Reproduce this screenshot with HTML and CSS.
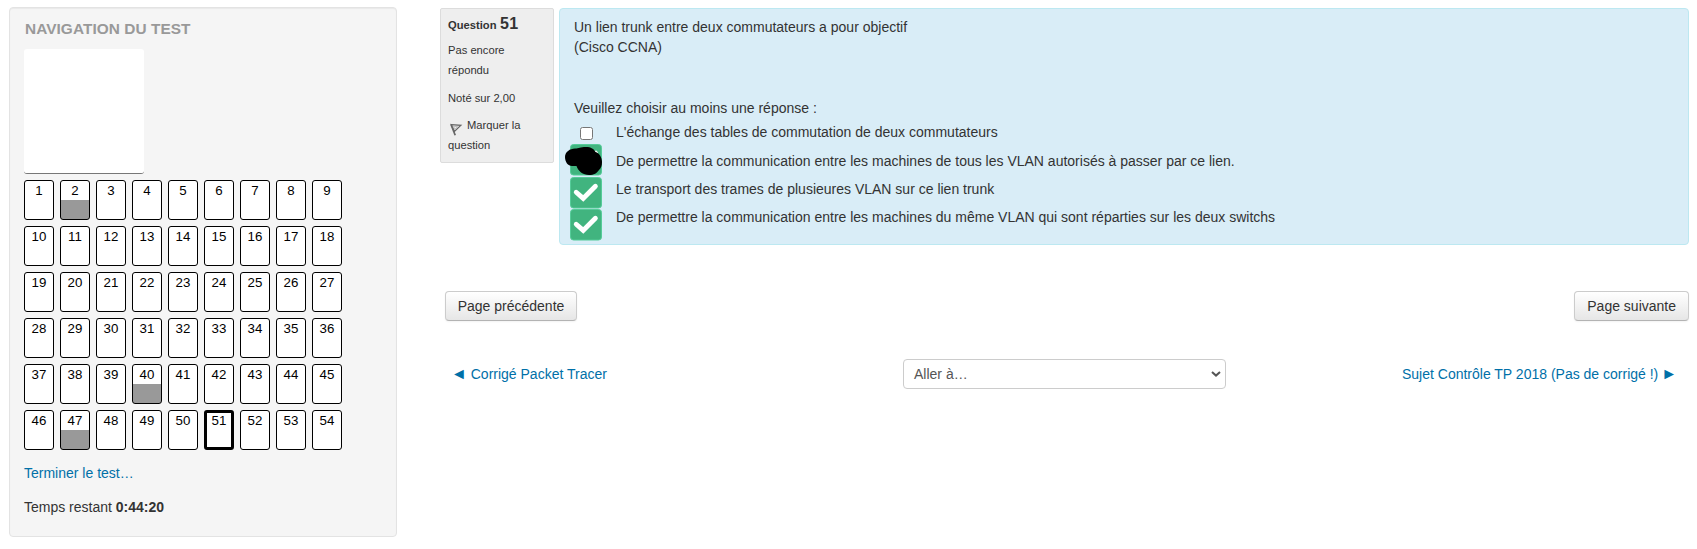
FILE: index.html
```
<!DOCTYPE html>
<html lang="fr">
<head>
<meta charset="utf-8">
<title>Test</title>
<link rel="stylesheet" href="styles.css">
</head>
<body>
<div class="page">
  <aside class="block">
    <h2 class="block-title">NAVIGATION DU TEST</h2>
    <div class="picture"></div>
    <nav class="qn-buttons">
      <a class="qn">1</a><a class="qn answered">2</a><a class="qn">3</a><a class="qn">4</a><a class="qn">5</a><a class="qn">6</a><a class="qn">7</a><a class="qn">8</a><a class="qn">9</a>
      <a class="qn">10</a><a class="qn">11</a><a class="qn">12</a><a class="qn">13</a><a class="qn">14</a><a class="qn">15</a><a class="qn">16</a><a class="qn">17</a><a class="qn">18</a>
      <a class="qn">19</a><a class="qn">20</a><a class="qn">21</a><a class="qn">22</a><a class="qn">23</a><a class="qn">24</a><a class="qn">25</a><a class="qn">26</a><a class="qn">27</a>
      <a class="qn">28</a><a class="qn">29</a><a class="qn">30</a><a class="qn">31</a><a class="qn">32</a><a class="qn">33</a><a class="qn">34</a><a class="qn">35</a><a class="qn">36</a>
      <a class="qn">37</a><a class="qn">38</a><a class="qn">39</a><a class="qn answered">40</a><a class="qn">41</a><a class="qn">42</a><a class="qn">43</a><a class="qn">44</a><a class="qn">45</a>
      <a class="qn">46</a><a class="qn answered">47</a><a class="qn">48</a><a class="qn">49</a><a class="qn">50</a><a class="qn current">51</a><a class="qn">52</a><a class="qn">53</a><a class="qn">54</a>
    </nav>
    <a class="link finish">Terminer le test…</a>
    <div class="timer">Temps restant <b>0:44:20</b></div>
  </aside>
  <main class="main">
    <section class="question">
      <div class="info">
        <h3 class="info-title">Question <span class="info-number">51</span></h3>
        <div class="info-row">Pas encore répondu</div>
        <div class="info-row grade">Noté sur 2,00</div>
        <div class="info-row"><svg class="flag" viewBox="0 0 16 16"><path d="M3 3.5L7.2 14.3" fill="none" stroke="#666" stroke-width="1.7"/><path d="M3.2 3.6L12.8 4.4L6.4 10.4Z" fill="#eee" stroke="#666" stroke-width="1.3"/><path d="M5.4 5.4L9.6 5.6L7 8.2Z" fill="none" stroke="#aaa" stroke-width=".7"/></svg>Marquer la question</div>
      </div>
      <div class="content">
        <p class="qtext">Un lien trunk entre deux commutateurs a pour objectif<br>(Cisco CCNA)</p>
        <p class="prompt">Veuillez choisir au moins une réponse :</p>
        <div class="answers">
          <div class="marks">
            <input class="box" type="checkbox">
            <svg class="mark masked" viewBox="0 0 38 32"><rect x="6.5" y=".5" width="31" height="30.5" rx="3" fill="#41b47f" stroke="#55cc99"/><path d="M30 7.5L32.5 7L33.5 9Z" fill="#fff" stroke="#fff"/><path d="M1 13C1 8 6 4.5 11 4.5C15 4.5 16 3 22 3C27 3 30 5 31.500 8C35 9 38 13 38 18C38 22 37 24 35 26C33 29 30 31 25 31C19 31 14 27 12.500 22H8C4 22 1 18 1 13Z" fill="#000"/></svg>
            <svg class="mark" viewBox="0 0 32 32"><rect x=".5" y=".5" width="31" height="30.5" rx="3" fill="#41b47f" stroke="#55cc99"/><path d="M6.2 15.2L13.2 21.4L25.4 9.2" fill="none" stroke="#fff" stroke-width="4.8" stroke-linecap="round"/></svg>
            <svg class="mark" viewBox="0 0 32 32"><rect x=".5" y=".5" width="31" height="30.5" rx="3" fill="#41b47f" stroke="#55cc99"/><path d="M6.2 15.2L13.2 21.4L25.4 9.2" fill="none" stroke="#fff" stroke-width="4.8" stroke-linecap="round"/></svg>
          </div>
          <div class="labels">
            <label>L'échange des tables de commutation de deux commutateurs</label>
            <label>De permettre la communication entre les machines de tous les VLAN autorisés à passer par ce lien.</label>
            <label>Le transport des trames de plusieures VLAN sur ce lien trunk</label>
            <label>De permettre la communication entre les machines du même VLAN qui sont réparties sur les deux switchs</label>
          </div>
        </div>
      </div>
    </section>
    <div class="pager">
      <button class="btn">Page précédente</button>
      <button class="btn btn-next">Page suivante</button>
    </div>
    <div class="activity-nav">
      <a class="link"><span class="arrow">◄</span> Corrigé Packet Tracer</a>
      <div class="jump"><span>Aller à…</span><svg class="chevron" viewBox="0 0 10 6"><path d="M1 1L5 4.6L9 1" fill="none" stroke="#555" stroke-width="2"/></svg></div>
      <a class="link next">Sujet Contrôle TP 2018 (Pas de corrigé !) <span class="arrow">►</span></a>
    </div>
  </main>
</div>
</body>
</html>
```
FILE: styles.css
```
* { box-sizing: border-box; }
body {
  margin: 0;
  background: #fff;
  color: #333;
  font: 14px/20px "Liberation Sans", Arial, sans-serif;
}
h2, h3, p { margin: 0; }
.page { display: flex; align-items: flex-start; gap: 43px; padding: 7px 8px 0 9px; }
.block {
  width: 388px;
  height: 530px;
  padding: 11px 14px;
  background: #f5f5f5;
  border: 1px solid #e3e3e3;
  border-radius: 4px;
  box-shadow: inset 0 1px 1px rgba(0, 0, 0, .05);
}
.block-title {
  padding-left: 1px;
  font-size: 15.4px;
  line-height: 20px;
  letter-spacing: .06px;
  color: #999;
}
.picture {
  width: 120px;
  height: 125px;
  margin: 10px 0 6px;
  background: #fff;
  border-bottom: 1px solid #777;
  border-radius: 3px;
}
.qn-buttons { display: grid; grid-template-columns: repeat(9, 30px); gap: 6px; }
.qn {
  height: 40px;
  border: 1px solid #000;
  border-radius: 3px;
  background: #fff;
  color: #000;
  text-align: center;
  font-size: 13.3px;
  line-height: 19px;
}
.answered { background: linear-gradient(#fff 19px, #999 19px); }
.current { border-width: 3px; line-height: 15px; }
.link { color: #0070a8; }
.finish { display: block; margin-top: 13px; }
.timer { margin-top: 14px; }
.main { flex: 1; padding-top: 1px; }
.question { display: flex; align-items: flex-start; gap: 5px; }
.info {
  width: 114px;
  height: 155px;
  padding: 5px 7px;
  background: #eee;
  border: 1px solid #dcdcdc;
  border-radius: 2px;
  font-size: 11.2px;
}
.info-title { height: 20px; margin-bottom: 6px; font-size: 11.2px; line-height: 20px; }
.info-number { font-size: 16px; letter-spacing: .3px; margin-left: .5px; }
.info-row { margin-bottom: 8px; }
.grade { margin-bottom: 7px; }
.flag { width: 16px; height: 16px; margin: -4px 3px -4px 0; vertical-align: -4px; }
.content {
  flex: 1;
  height: 237px;
  padding: 8px 14px;
  background: #d9edf7;
  border: 1px solid #bce8f1;
  border-radius: 4px;
}
.prompt { margin-top: 41px; }
.answers { display: flex; }
.marks { display: flex; flex-direction: column; width: 42px; margin-top: 9px; }
.box { width: 13px; height: 13px; margin: 0 0 4px 6px; }
.mark { width: 32px; height: 32px; margin-left: -4px; }
.masked { width: 38px; margin: 0 0 1px -10px; }
.labels { display: flex; flex-direction: column; gap: 8px; padding-top: 4px; }
.labels label:first-child { margin-bottom: 1px; }
.pager { display: flex; justify-content: space-between; margin: 46px 0 0 5px; }
.btn {
  height: 30px;
  padding: 4px 11.7px;
  border: 1px solid #ccc;
  border-bottom-color: #b3b3b3;
  border-radius: 4px;
  background: linear-gradient(#fff, #e6e6e6);
  box-shadow: 0 1px 2px rgba(0, 0, 0, .05);
  color: #333;
  font: inherit;
}
.btn-next { padding: 4px 12px; }
.activity-nav {
  display: grid;
  grid-template-columns: 452px 323px 1fr;
  align-items: center;
  margin-top: 38px;
  padding: 0 12px 0 11px;
}
.arrow { font-size: 16px; line-height: 1; }
.jump {
  display: flex;
  align-items: center;
  justify-content: space-between;
  height: 30px;
  padding: 0 4px 0 10px;
  border: 1px solid #ccc;
  border-radius: 4px;
  color: #555;
}
.chevron { width: 10px; height: 6px; }
.next { text-align: right; }
.next .arrow { margin-left: -1px; }
```
